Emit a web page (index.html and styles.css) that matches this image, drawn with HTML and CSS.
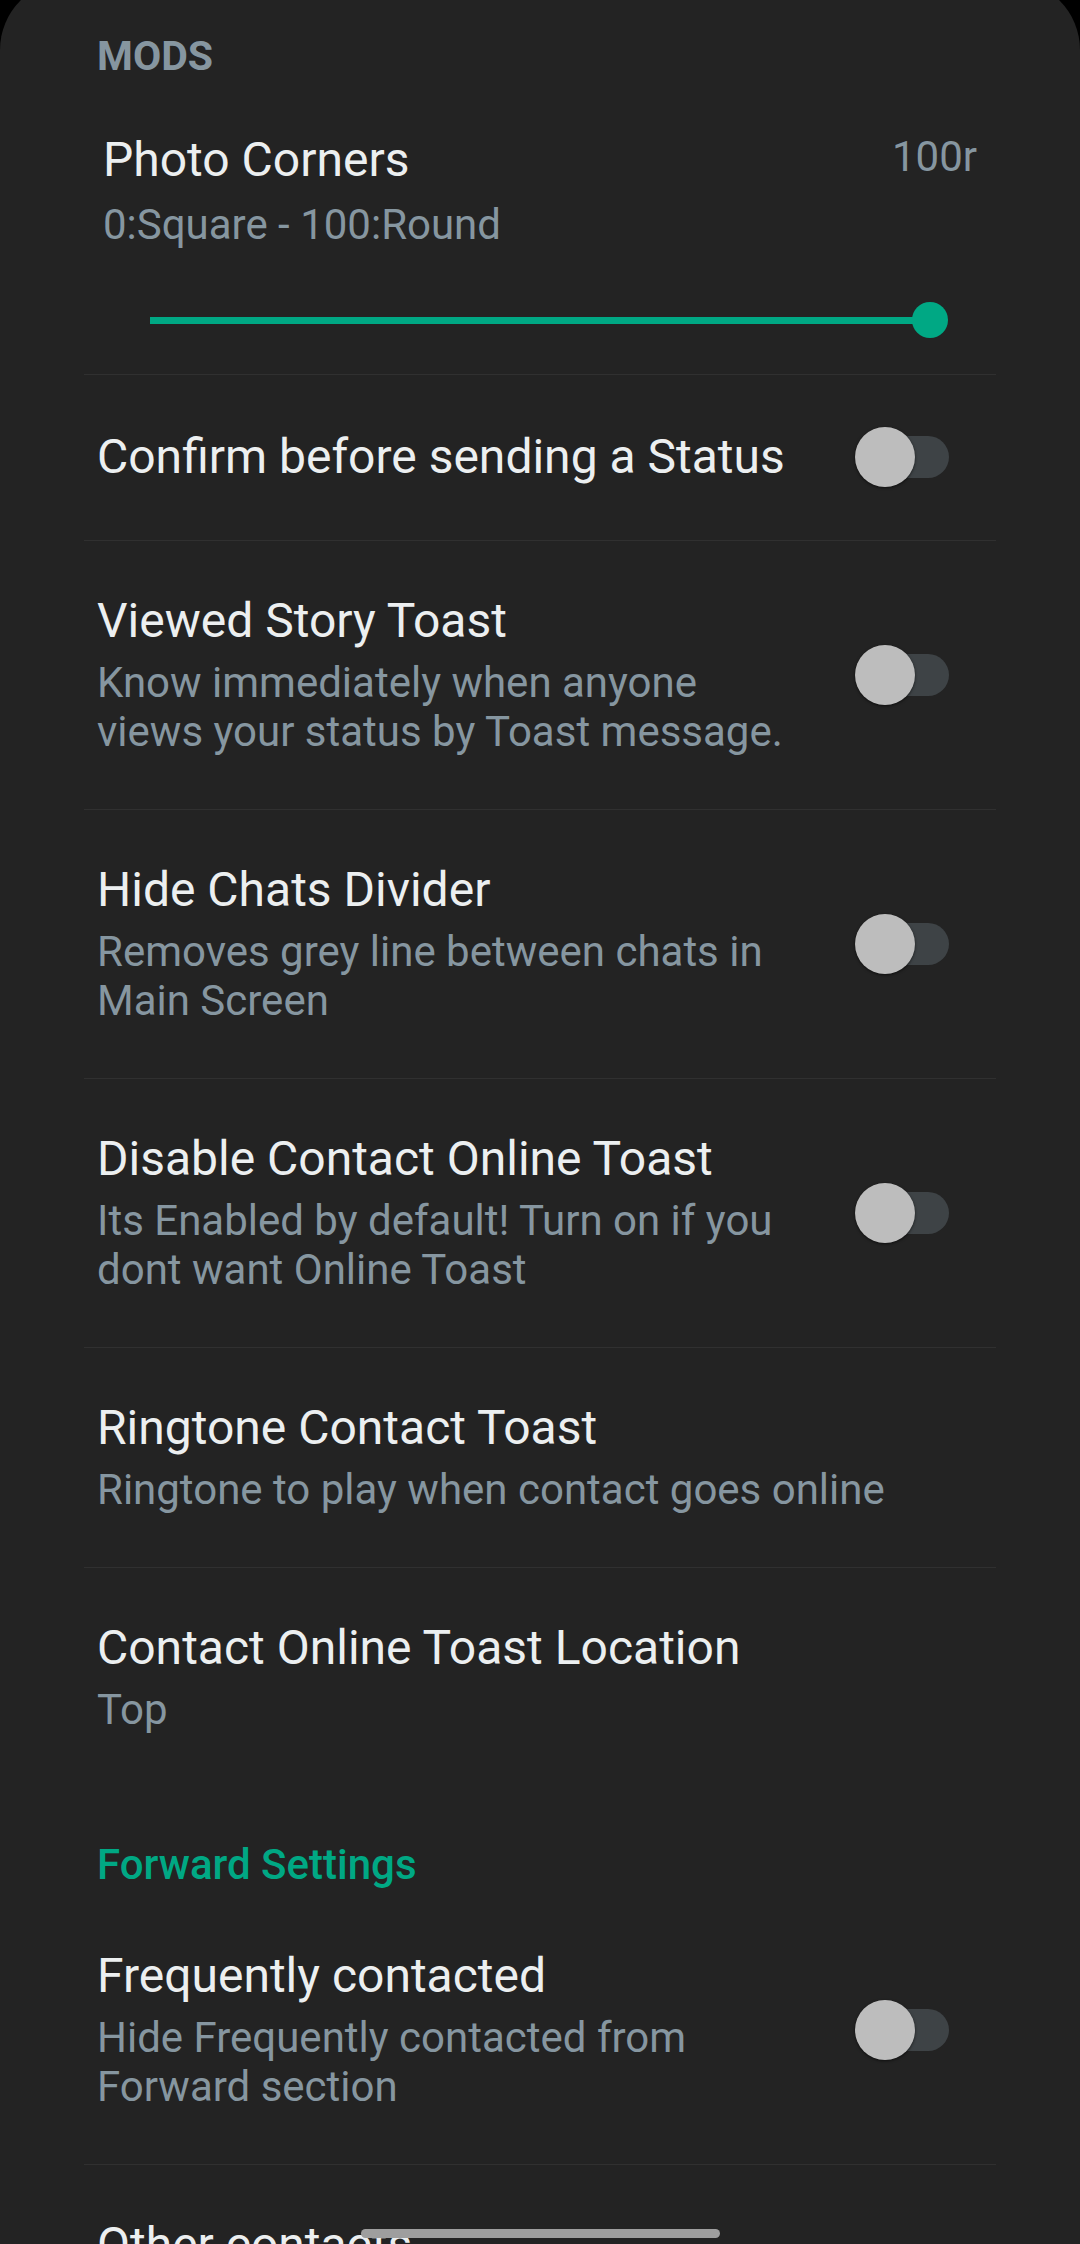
FILE: index.html
```html
<!DOCTYPE html>
<html lang="en">
<head>
  <meta charset="UTF-8" />
  <meta name="viewport" content="width=device-width, initial-scale=1.0"/>
  <title>Mods Settings</title>
  <link rel="stylesheet" href="styles.css">
</head>
<body>

<div class="screen">

  <div class="category category-mods">MODS</div>

  <!-- Photo corners slider -->
  <div class="pref pref-slider">
    <div class="slider-head">
      <div class="slider-text">
        <div class="pref-title">Photo Corners</div>
        <div class="pref-summary">0:Square - 100:Round</div>
      </div>
      <div class="slider-value">100r</div>
    </div>
    <div class="slider">
      <div class="slider-track"></div>
      <div class="slider-thumb"></div>
    </div>
  </div>

  <div class="pref">
    <div class="pref-text">
      <div class="pref-title">Confirm before sending a Status</div>
    </div>
    <div class="switch"><span class="switch-thumb"></span></div>
  </div>

  <div class="pref">
    <div class="pref-text">
      <div class="pref-title">Viewed Story Toast</div>
      <div class="pref-summary">Know immediately when anyone views your status by Toast message.</div>
    </div>
    <div class="switch"><span class="switch-thumb"></span></div>
  </div>

  <div class="pref">
    <div class="pref-text">
      <div class="pref-title">Hide Chats Divider</div>
      <div class="pref-summary">Removes grey line between chats in Main Screen</div>
    </div>
    <div class="switch"><span class="switch-thumb"></span></div>
  </div>

  <div class="pref">
    <div class="pref-text">
      <div class="pref-title">Disable Contact Online Toast</div>
      <div class="pref-summary">Its Enabled by default! Turn on if you dont want Online Toast</div>
    </div>
    <div class="switch"><span class="switch-thumb"></span></div>
  </div>

  <div class="pref">
    <div class="pref-text wide">
      <div class="pref-title">Ringtone Contact Toast</div>
      <div class="pref-summary">Ringtone to play when contact goes online</div>
    </div>
  </div>

  <div class="pref last">
    <div class="pref-text wide">
      <div class="pref-title">Contact Online Toast Location</div>
      <div class="pref-summary">Top</div>
    </div>
  </div>

  <div class="category category-green">Forward Settings</div>

  <div class="pref">
    <div class="pref-text">
      <div class="pref-title">Frequently contacted</div>
      <div class="pref-summary">Hide Frequently contacted from Forward section</div>
    </div>
    <div class="switch"><span class="switch-thumb"></span></div>
  </div>

  <div class="pref">
    <div class="pref-text">
      <div class="pref-title">Other contacts</div>
    </div>
  </div>

</div>

<div class="home-bar"></div>

</body>
</html>
```

FILE: styles.css
```css
body { margin: 0; padding: 0; background: #000; height: 2244px; overflow: hidden; font-family: Roboto, "Noto Sans", Arial, sans-serif; position: relative; }
.screen { background: #232323; border-radius: 70px 70px 0 0; margin-top: -20px; padding-top: 20px; min-height: 2300px; }

.category { line-height: 44px; }
.category-mods { color: #8696a0; font-size: 41px; font-weight: 700; padding: 34px 97px 0; }
.category-green { color: #00a884; font-size: 42px; font-weight: 500; padding: 56px 97px 9px; }

.pref { display: flex; align-items: center; margin: 0 84px; padding: 52px 47px 53px 13px; border-bottom: 1px solid #303030; }
.pref.last { border-bottom: none; }
.pref-text { flex: 1; padding-right: 60px; }
.pref-text.wide { padding-right: 0; }
.pref-title { color: #eceff0; font-size: 48px; line-height: 56px; }
.pref-summary { color: #8696a0; font-size: 42px; line-height: 49px; margin-top: 9px; }

.pref-slider { display: block; padding: 54px 19px 34px 19px; }
.slider-head { display: flex; justify-content: space-between; align-items: flex-start; }
.slider-value { color: #8696a0; font-size: 42px; line-height: 50px; }
.pref-slider .pref-summary { margin-top: 12px; }
.slider { position: relative; height: 40px; margin: 51px 0 0 47px; width: 780px; }
.slider-track { position: absolute; left: 0; right: 0; top: 17px; height: 7px; background: #00a884; }
.slider-thumb { position: absolute; right: -18px; top: 2px; width: 36px; height: 36px; border-radius: 50%; background: #00a884; }

.switch { position: relative; width: 94px; height: 60px; flex: none; }
.switch::before { content: ""; position: absolute; right: 0; top: 9px; width: 78px; height: 42px; border-radius: 21px; background: #3e4346; }
.switch-thumb { position: absolute; left: 0; top: 0; width: 60px; height: 60px; border-radius: 50%; background: #bdbdbd; box-shadow: 0 1px 3px rgba(0,0,0,0.6); }

.home-bar { position: absolute; left: 361px; top: 2229px; width: 359px; height: 9px; border-radius: 5px; background: #9e9e9e; }
```
